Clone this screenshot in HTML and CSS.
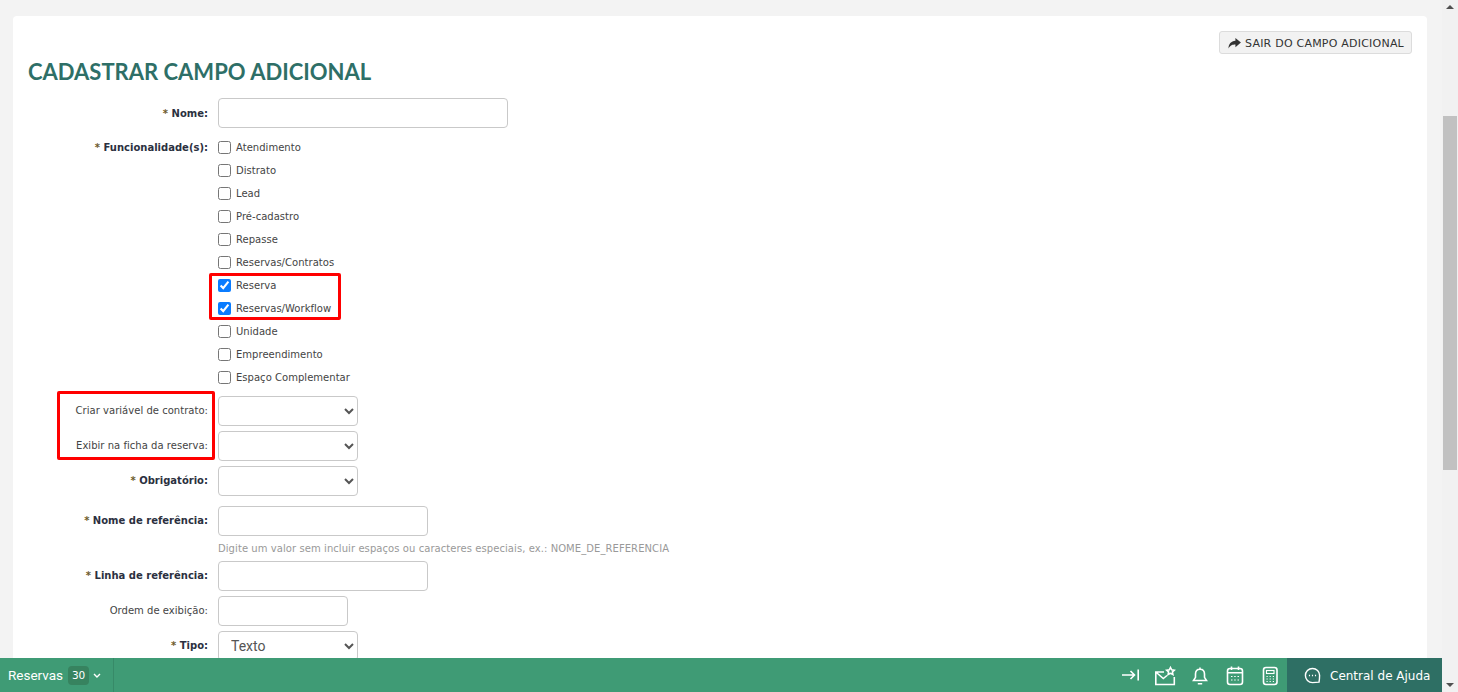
FILE: index.html
```html
<!DOCTYPE html>
<html lang="pt-BR">
<head>
<meta charset="utf-8">
<title>Cadastrar campo adicional</title>
<link rel="stylesheet" href="styles.css">
</head>
<body>
<div class="page">
  <div class="main">
    <div class="scroller">
      <section class="card">
        <div class="card-top">
          <button class="exit-btn" type="button">
            <svg class="exit-icon" viewBox="0 0 14 12" aria-hidden="true"><path d="M8 0 14 5 8 10V7.200C4.800 7.200 2.500 7.800 0.500 11.500 0.300 6.500 3.400 3.200 8 2.900Z"/></svg>
            SAIR DO CAMPO ADICIONAL
          </button>
        </div>
        <h1 class="title">CADASTRAR CAMPO ADICIONAL</h1>
        <form class="form">
          <div class="row row-name">
            <label class="label req">* <b>Nome:</b></label>
            <input class="input w-290" type="text">
          </div>
          <div class="row row-checks">
            <label class="label req label-checks">* <b>Funcionalidade(s):</b></label>
            <div class="checks">
              <label class="check"><input type="checkbox">Atendimento</label>
              <label class="check"><input type="checkbox">Distrato</label>
              <label class="check"><input type="checkbox">Lead</label>
              <label class="check"><input type="checkbox">Pré-cadastro</label>
              <label class="check"><input type="checkbox">Repasse</label>
              <label class="check"><input type="checkbox">Reservas/Contratos</label>
              <label class="check"><input type="checkbox" checked>Reserva</label>
              <label class="check"><input type="checkbox" checked>Reservas/Workflow</label>
              <label class="check"><input type="checkbox">Unidade</label>
              <label class="check"><input type="checkbox">Empreendimento</label>
              <label class="check"><input type="checkbox">Espaço Complementar</label>
            </div>
          </div>
          <div class="row row-selects">
            <label class="label">Criar variável de contrato:</label>
            <select class="select"><option></option></select>
          </div>
          <div class="row row-selects">
            <label class="label">Exibir na ficha da reserva:</label>
            <select class="select"><option></option></select>
          </div>
          <div class="row row-selects">
            <label class="label req">* <b>Obrigatório:</b></label>
            <select class="select"><option></option></select>
          </div>
          <div class="row row-ref">
            <label class="label req">* <b>Nome de referência:</b></label>
            <input class="input w-210" type="text">
          </div>
          <p class="help">Digite um valor sem incluir espaços ou caracteres especiais, ex.: NOME_DE_REFERENCIA</p>
          <div class="row row-line">
            <label class="label req">* <b>Linha de referência:</b></label>
            <input class="input w-210" type="text">
          </div>
          <div class="row row-order">
            <label class="label">Ordem de exibição:</label>
            <input class="input w-130" type="text">
          </div>
          <div class="row row-order">
            <label class="label req">* <b>Tipo:</b></label>
            <select class="select"><option>Texto</option></select>
          </div>
          <div class="mark mark-checks"></div>
          <div class="mark mark-labels"></div>
        </form>
      </section>
    </div>
    <footer class="bar">
      <div class="bar-tab">Reservas<span class="count">30</span>
        <svg class="chev" viewBox="0 0 8 5" aria-hidden="true"><path d="M1 1 4 4 7 1"/></svg>
      </div>
      <div class="bar-tools">
        <svg class="tool" viewBox="0 0 22 22" aria-hidden="true"><path d="M3 11H15.500M11.500 7l4 4-4 4M19.200 5.500v11"/></svg>
        <svg class="tool" viewBox="0 0 22 22" aria-hidden="true"><path d="M10 8H1.800v12.500h18.500V13M1.800 8l7.500 6.500 3.700-3"/><path d="M16.500 3.500l1.200 2.300 2.600.4-1.900 1.800.5 2.500-2.400-1.200-2.400 1.200.5-2.500-1.900-1.800 2.600-.4z"/></svg>
        <svg class="tool" viewBox="0 0 22 22" aria-hidden="true"><path d="M11 3.500v1.700M11 5.200c-3.200 0-4.500 2.300-4.500 4.800v3.300L4.500 16.500h13l-2-3.200V10c0-2.500-1.300-4.800-4.500-4.800ZM8.800 19.800h4.400"/></svg>
        <svg class="tool" viewBox="0 0 22 22" aria-hidden="true"><rect x="3.500" y="4.500" width="15" height="16" rx="2.500"/><path d="M3.500 8.800h15M7.500 2.500v3.500M14.500 2.500v3.500"/><path class="thin" d="M7 12.500h1.500M10.200 12.500h1.500M13.500 12.500H15M7 16h1.500M10.200 16h1.500M13.500 16H15"/></svg>
        <svg class="tool" viewBox="0 0 22 22" aria-hidden="true"><rect x="4.500" y="3.500" width="13.500" height="17" rx="2.500"/><rect class="thin" x="7.500" y="6.500" width="7.500" height="3"/><path class="thin" d="M7.500 12.500h1.200M10.600 12.500h1.200M13.800 12.500H15M7.500 15h1.200M10.600 15h1.200M13.800 15H15M7.500 17.500h1.200M10.600 17.500h1.200M13.800 17.500H15"/></svg>
      </div>
      <div class="help-tab">
        <svg class="help-icon" viewBox="0 0 18 18" aria-hidden="true"><path d="M9 1.500c4.300 0 7.500 3.200 7.500 7.200 0 2.500-.2 5-.6 7.300C14 16.300 11 16.500 9 16.500c-4.300 0-7.500-3.400-7.500-7.500S4.700 1.500 9 1.500Z"/><path class="dots" d="M5.200 9h1.200M8.400 9h1.200M11.600 9h1.200"/></svg>
        Central de Ajuda
      </div>
    </footer>
  </div>
  <aside class="scrollbar">
    <span class="arrow up"></span>
    <span class="thumb"></span>
    <span class="arrow down"></span>
  </aside>
</div>
</body>
</html>
```

FILE: styles.css
```css
* { box-sizing: border-box; }
html, body { height: 100%; margin: 0; }
body {
  overflow: hidden;
  background: #f3f3f3;
  font-family: "DejaVu Sans", Verdana, sans-serif;
  font-size: 10px;
  color: #333;
}
.page { display: flex; height: 692px; }
.main { flex: 1; min-width: 0; display: flex; flex-direction: column; }
.scroller { flex: 1; min-height: 0; overflow: hidden; padding: 16px 15px 0 13px; }
.card { background: #fff; border-radius: 4px; padding: 15px 15px 0; height: 700px; }
.card-top { display: flex; justify-content: flex-end; }
.exit-btn {
  display: flex; align-items: center; gap: 4px;
  height: 23px; width: 193px; padding: 1px 0 0 8px;
  background: #f2f2f2; border: 1px solid #dcdcdc; border-radius: 3px;
  font: 11px "DejaVu Sans", Verdana, sans-serif; letter-spacing: 0.22px; color: #333;
  white-space: nowrap;
}
.exit-icon { width: 13px; height: 11px; fill: #333; flex: none; }
.title {
  margin: 3px 0 0; height: 41px;
  font: 700 22px/30px Lato, sans-serif;
  color: #2e6f67;
}
.form { position: relative; margin-left: -15px; }
.row { display: grid; grid-template-columns: 195px auto; column-gap: 10px; align-items: center; justify-content: start; }
.label { text-align: right; white-space: nowrap; color: #444; letter-spacing: 0.03px; }
.req { color: #6d5a2a; font-weight: 700; letter-spacing: 0; }
.req b { color: #2b3040; }
.row-name { height: 30px; }
.row-checks { align-items: start; margin-top: 8px; margin-bottom: 4px; }
.label-checks { margin-top: 6px; }
.checks { display: flex; flex-direction: column; }
.check { display: flex; align-items: center; height: 23px; white-space: nowrap; color: #444; letter-spacing: 0.03px; }
.check input { margin: 0 5px 0 0; width: 13px; height: 13px; accent-color: #0a7cff; }
.row-selects { height: 35px; }
.input, .select {
  height: 30px; background: #fff;
  border: 1px solid #c9c9c9; border-radius: 4px;
  font: 14px Roboto, sans-serif; color: #555;
}
.select { width: 140px; padding-left: 8px; }
.w-290 { width: 290px; }
.w-210 { width: 210px; }
.w-130 { width: 130px; }
.row-ref { height: 30px; margin-top: 8px; }
.help { margin: 7px 0 0 205px; height: 18px; line-height: 12px; font-size: 10px; letter-spacing: 0.07px; color: #999; white-space: nowrap; }
.row-line { height: 30px; }
.row-order { height: 30px; margin-top: 5px; }
.row-ref .label, .row-line .label, .row-order .label { margin-bottom: 2px; }
.mark { position: absolute; border: 3px solid #f00; border-radius: 2px; pointer-events: none; }
.mark-checks { left: 196px; top: 175px; width: 132px; height: 47px; }
.mark-labels { left: 44px; top: 293px; width: 158px; height: 69px; }

.bar {
  flex: none; height: 34px; display: flex; align-items: stretch;
  background: #3f9b75; color: #fff;
}
.bar-tab {
  display: flex; align-items: center; width: 114px; padding-left: 8px;
  border-right: 1px solid #378a68; font: 13.5px Roboto, sans-serif;
  white-space: nowrap;
}
.count {
  display: inline-flex; align-items: center; justify-content: center;
  width: 21px; height: 19px; margin-left: 5px; border-radius: 4px;
  background: #37835f; font: 10.5px "DejaVu Sans", sans-serif;
}
.chev { width: 8px; height: 5px; margin-left: 4px; fill: none; stroke: #fff; stroke-width: 1.400; }
.bar-tools { flex: 1; display: flex; align-items: center; justify-content: flex-end; gap: 13px; padding-right: 6px; }
.tool { width: 22px; height: 22px; fill: none; stroke: #fff; stroke-width: 1.600; }
.tool .thin { stroke-width: 1.100; }
.help-tab {
  flex: none; width: 155px; display: flex; align-items: center; gap: 9px; padding: 1px 0 0 17px;
  background: #2e6f64; font: 12px/1 "DejaVu Sans", sans-serif; white-space: nowrap;
}
.help-icon { width: 17px; height: 17px; fill: none; stroke: #fff; stroke-width: 1.500; }
.help-icon .dots { stroke-width: 1.700; }

.scrollbar { flex: none; width: 16px; display: flex; flex-direction: column; align-items: center; background: #f1f1f1; }
.thumb { width: 14px; height: 354px; margin-top: 107px; background: #c1c1c1; }
.arrow { width: 0; height: 0; border-left: 4px solid transparent; border-right: 4px solid transparent; }
.arrow.up { margin-top: 5px; border-bottom: 4px solid #505050; }
.arrow.down { margin-top: auto; margin-bottom: 5px; border-top: 4px solid #505050; }
```
